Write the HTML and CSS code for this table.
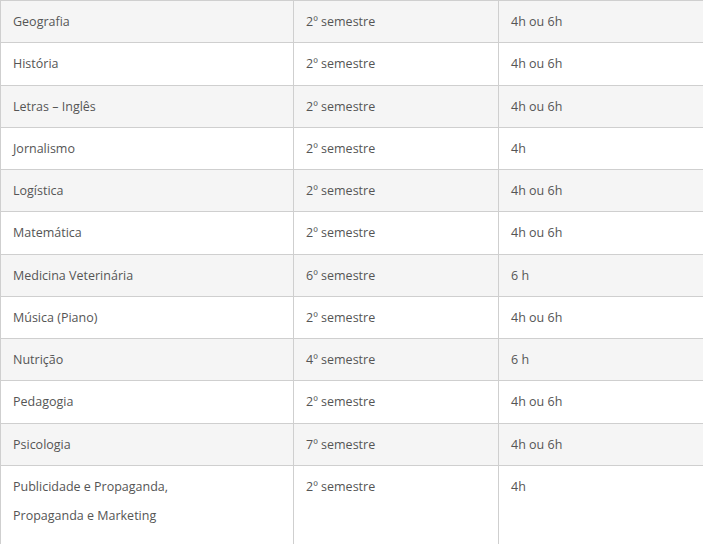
FILE: index.html
```html
<!DOCTYPE html>
<html lang="pt-BR">
<head>
<meta charset="utf-8">
<link rel="stylesheet" href="styles.css">
</head>
<body>
<table class="courses">
  <colgroup><col class="c1"><col class="c2"><col class="c3"></colgroup>
  <tbody>
    <tr><td>Geografia</td><td>2º semestre</td><td>4h ou 6h</td></tr>
    <tr><td>História</td><td>2º semestre</td><td>4h ou 6h</td></tr>
    <tr><td>Letras – Inglês</td><td>2º semestre</td><td>4h ou 6h</td></tr>
    <tr><td>Jornalismo</td><td>2º semestre</td><td>4h</td></tr>
    <tr><td>Logística</td><td>2º semestre</td><td>4h ou 6h</td></tr>
    <tr><td>Matemática</td><td>2º semestre</td><td>4h ou 6h</td></tr>
    <tr><td>Medicina Veterinária</td><td>6º semestre</td><td>6 h</td></tr>
    <tr><td>Música (Piano)</td><td>2º semestre</td><td>4h ou 6h</td></tr>
    <tr><td>Nutrição</td><td>4º semestre</td><td>6 h</td></tr>
    <tr><td>Pedagogia</td><td>2º semestre</td><td>4h ou 6h</td></tr>
    <tr><td>Psicologia</td><td>7º semestre</td><td>4h ou 6h</td></tr>
    <tr class="last"><td>Publicidade e Propaganda,<br>Propaganda e Marketing</td><td>2º semestre</td><td>4h</td></tr>
  </tbody>
</table>
</body>
</html>
```
FILE: styles.css
```css
html, body {
  margin: 0;
  padding: 0;
  background: #fff;
  overflow: hidden;
  height: 544px;
}
.courses {
  border-collapse: collapse;
  width: 703px;
  table-layout: fixed;
  font-family: "Open Sans", "Noto Sans", sans-serif;
  font-size: 12.5px;
  color: #555;
}
.c1 { width: 293px; }
.c2 { width: 205px; }
.c3 { width: 205px; }
.courses td {
  border-left: 1px solid #cfcfcf;
  border-bottom: 1px solid #cfcfcf;
  padding: 6px 12px;
  line-height: 29.25px;
  vertical-align: top;
}
.courses tr:first-child td { border-top: 1px solid #cfcfcf; }
.courses tr:nth-child(odd) td { background: #f5f5f5; }
.courses tr:nth-child(even) td { background: #fff; }
.courses tr.last td { padding-bottom: 30px; }
```
